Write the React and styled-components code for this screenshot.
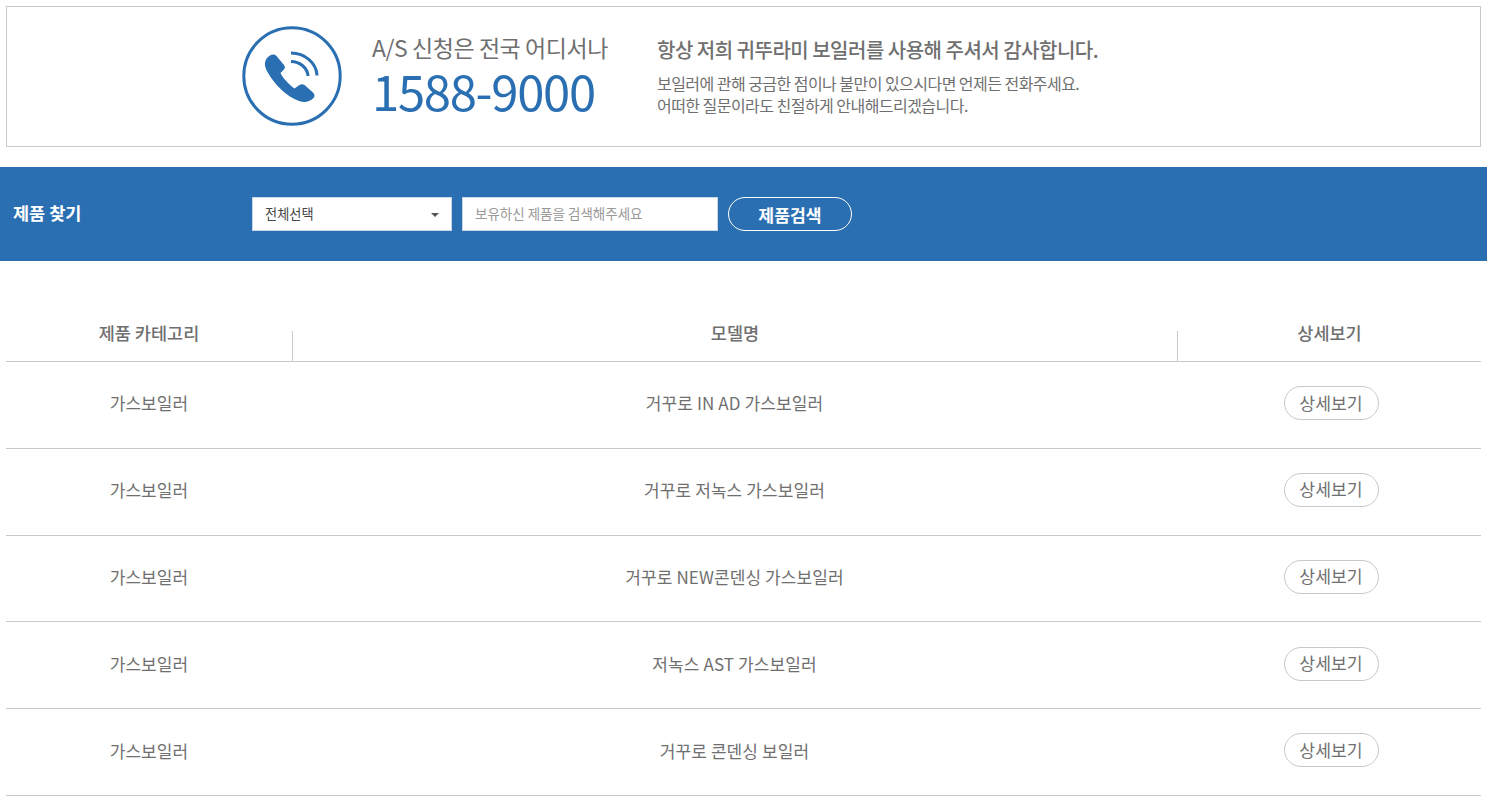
import styled, { createGlobalStyle } from 'styled-components';

const GlobalStyle = createGlobalStyle`
  * { box-sizing: border-box; }
  body {
    margin: 0;
    background: #fff;
    color: #6f6f6f;
    font-family: "Noto Sans CJK KR", "Noto Sans", sans-serif;
  }
`;

const Page = styled.div`
  padding-top: 6px;
`;

const CallBox = styled.section`
  display: flex;
  align-items: center;
  height: 141px;
  margin: 0 6px;
  padding-left: 235px;
  border: 1px solid #c9c9c9;
`;

const CallIcon = styled.svg`
  width: 100px;
  height: 100px;
  flex: none;
  margin-top: -1px;
`;

const CallInfo = styled.div`
  width: 286px;
  margin-left: 30px;
  padding-bottom: 5px;
`;

const CallLabel = styled.p`
  margin: 0;
  font-size: 23px;
  line-height: 32px;
  letter-spacing: -0.45px;
  color: #706f6f;
`;

const CallNumber = styled.strong`
  display: block;
  font-size: 49px;
  line-height: 54px;
  font-weight: 400;
  letter-spacing: -1.3px;
  color: #2b6fb3;
`;

const Thanks = styled.div`
  margin-left: -1px;
  padding-bottom: 1px;
  color: #6f6f6f;
`;

const ThanksTitle = styled.h2`
  margin: 0 0 9px;
  font-size: 20px;
  line-height: 26px;
  font-weight: 500;
  letter-spacing: -0.5px;
`;

const ThanksText = styled.p`
  margin: 0;
  font-size: 16px;
  line-height: 22px;
  letter-spacing: -0.54px;
`;

const SearchBar = styled.form`
  display: flex;
  align-items: center;
  height: 94px;
  margin-top: 20px;
  padding-left: 13px;
  background: #2b6fb3;
`;

const SearchTitle = styled.h3`
  width: 239px;
  margin: 0;
  padding-bottom: 3px;
  font-size: 17.5px;
  font-weight: 700;
  color: #fff;
`;

const SelectBox = styled.div`
  display: flex;
  align-items: center;
  justify-content: space-between;
  width: 200px;
  height: 34px;
  padding: 0 12px 2px 12px;
  background: #fff;
  border: 1px solid #c8d6e6;
  font-size: 13.2px;
  color: #444;
`;

const Caret = styled.span`
  width: 0;
  height: 0;
  margin-top: 4px;
  border-left: 4px solid transparent;
  border-right: 4px solid transparent;
  border-top: 4px solid #555;
`;

const SearchInput = styled.input`
  width: 256px;
  height: 34px;
  margin-left: 10px;
  padding: 0 12px 2px;
  background: #fff;
  border: 1px solid #c8d6e6;
  border-radius: 0;
  outline: none;
  font: 400 13.5px "Noto Sans CJK KR", sans-serif;

  &::placeholder {
    color: #999;
    opacity: 1;
  }
`;

const SearchButton = styled.button`
  width: 124px;
  height: 34px;
  margin-left: 10px;
  padding: 0;
  background: transparent;
  border: 1px solid #fff;
  border-radius: 17px;
  font: 700 17.2px "Noto Sans CJK KR", sans-serif;
  color: #fff;
`;

const Table = styled.div`
  margin: 50px 6px 0;
`;

const Row = styled.div`
  display: grid;
  grid-template-columns: 286px 885px 1fr;
  align-items: center;
  height: ${p => (p.$head ? '51px' : '86.8px')};
  border-bottom: 1px solid #c9c9c9;
  text-align: center;
`;

const HeadCell = styled.div`
  align-self: end;
  height: 30px;
  font-size: 17.5px;
  line-height: 3px;
  font-weight: 500;
  color: #6f6f6f;
  border-left: ${p => (p.$divider ? '1px solid #c9c9c9' : '0')};
`;

const Cell = styled.div`
  padding-bottom: 4px;
  font-size: 17px;
  letter-spacing: 0.1px;
  color: #6f6f6f;
`;

const DetailButton = styled.button`
  width: 95px;
  height: 34px;
  padding: 0 0 2px;
  background: #fff;
  border: 1px solid #c9c9c9;
  border-radius: 17px;
  font: 400 17.2px "Noto Sans CJK KR", sans-serif;
  color: #6f6f6f;
  justify-self: center;
  margin: -3.5px 0 0 4px;
`;

const models = [
  '거꾸로 IN AD 가스보일러',
  '거꾸로 저녹스 가스보일러',
  '거꾸로 NEW콘덴싱 가스보일러',
  '저녹스 AST 가스보일러',
  '거꾸로 콘덴싱 보일러',
];

function PhoneIcon() {
  return (
    <CallIcon viewBox="0 0 100 100" fill="none">
      <circle cx="50" cy="50" r="48.2" stroke="#2b6fb3" strokeWidth="3" />
      <path
        d="M28 29.5 C30 28 33 28 34.5 30 L42 39 C43.5 41 43 42.5 41.5 44 L38.5 47 C41 52.5 47 58.5 52.5 62.5 L57.5 59 C59 58 61 58 62.5 59 L71 66.5 C73 68.5 73 71 71 72.5 C67 76 63 77 57 75 C45 71 32 58 25.5 46 C21.5 39 22 33.5 28 29.5 Z"
        fill="#2b6fb3"
      />
      <path d="M49 35.5 C58 35.5 65.5 42 66 50" stroke="#2b6fb3" strokeWidth="3" />
      <path d="M49 27 C63 27 74.5 37 75 49.5" stroke="#2b6fb3" strokeWidth="3" />
    </CallIcon>
  );
}

export default function App() {
  return (
    <Page>
      <GlobalStyle />
      <CallBox>
        <PhoneIcon />
        <CallInfo>
          <CallLabel>A/S 신청은 전국 어디서나</CallLabel>
          <CallNumber>1588-9000</CallNumber>
        </CallInfo>
        <Thanks>
          <ThanksTitle>항상 저희 귀뚜라미 보일러를 사용해 주셔서 감사합니다.</ThanksTitle>
          <ThanksText>보일러에 관해 궁금한 점이나 불만이 있으시다면 언제든 전화주세요.</ThanksText>
          <ThanksText>어떠한 질문이라도 친절하게 안내해드리겠습니다.</ThanksText>
        </Thanks>
      </CallBox>
      <SearchBar>
        <SearchTitle>제품 찾기</SearchTitle>
        <SelectBox>
          전체선택
          <Caret />
        </SelectBox>
        <SearchInput placeholder="보유하신 제품을 검색해주세요" />
        <SearchButton type="button">제품검색</SearchButton>
      </SearchBar>
      <Table>
        <Row $head>
          <HeadCell>제품 카테고리</HeadCell>
          <HeadCell $divider>모델명</HeadCell>
          <HeadCell $divider>상세보기</HeadCell>
        </Row>
        {models.map(model => (
          <Row key={model}>
            <Cell>가스보일러</Cell>
            <Cell>{model}</Cell>
            <DetailButton type="button">상세보기</DetailButton>
          </Row>
        ))}
      </Table>
    </Page>
  );
}
